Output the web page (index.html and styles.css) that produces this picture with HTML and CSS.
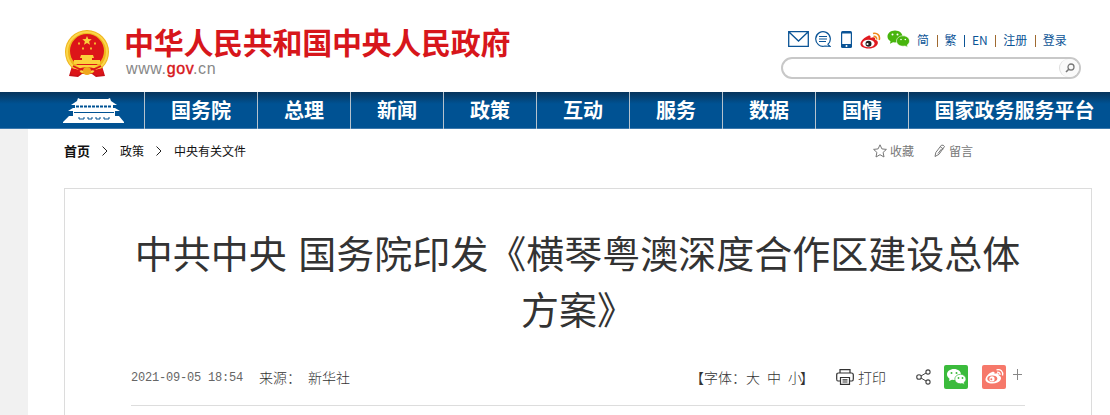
FILE: index.html
```html
<!DOCTYPE html>
<html lang="zh-CN">
	<head>
		<meta charset="UTF-8">
		<title>中央有关文件_中国政府网</title>
		<link rel="stylesheet" href="styles.css">
	</head>
	<body>
		<div class="header">
			<a class="logo" href="#">
				<svg class="emblem" width="46" height="48" viewBox="0 0 46 48">
					<path d="M8 36L5 46l9 1 4-3h10l4 3 9-1-3-10z" fill="#c91018"/>
					<circle cx="23" cy="22" r="22" fill="#f0b51c"/>
					<circle cx="23" cy="22" r="20" fill="none" stroke="#fbd64a" stroke-width="2"/>
					<circle cx="23" cy="21" r="17" fill="#dc1519"/>
					<path d="M23 6l1.3 3.1 3.4.2-2.6 2.1.9 3.3-3-1.8-3 1.800.9-3.300-2.600-2.100 3.400-.2z" fill="#fbd13b"/>
					<path d="M14 12.500h2v2h-2zM30 12.500h2v2h-2zM18 17.500h2v2h-2zM26 17.500h2v2h-2z" fill="#f6b52c"/>
					<path d="M17 25h12l1 3h-14zM18 28h10v2h-10zM10 30h26v4h-26zM12 35h22l-3 3h-16z" fill="#fbd13b"/>
					<path d="M9 36q14 8 28 0M13 41q10-6 20 0" fill="none" stroke="#dc1519" stroke-width="2"/>
					<path d="M7 39q7-1 10 4-4 4-10 1M39 39q-7-1-10 4 4 4 10 1" fill="#dc1519"/>
					<circle cx="23" cy="41" r="4" fill="#f0a71c"/>
				</svg>
				<div class="name">
					<h1>中华人民共和国中央人民政府</h1>
					<p>www.<b>gov</b>.cn</p>
				</div>
			</a>
			<div class="tools">
				<div class="links">
					<svg class="mail" width="21" height="16" viewBox="0 0 21 16"><path d="M.7.700h19.600v14.600H.7zM1 1l9.500 9L20 1" fill="none" stroke="#0b5496" stroke-width="1.300"/></svg>
					<svg class="chat" width="16" height="16" viewBox="0 0 16 16"><path d="M13 13.300A7.300 7.300 0 1 0 10 15l5 .3zM4 5.500h8M4 8h8M4 10.500h7" fill="none" stroke="#0b5496" stroke-width="1.200"/></svg>
					<svg class="phone" width="11" height="17" viewBox="0 0 11 17"><rect width="11" height="17" rx="1.500" fill="#0b5496"/><path d="M1.200 2.500h8.600v10.500H1.200z" fill="#fff"/><circle cx="5.500" cy="15" r="1" fill="#fff"/></svg>
					<svg class="weibo" width="21" height="18" viewBox="0 0 21 18">
						<path d="M8 4c2-1 3 0 2.500 2 3-1.300 5-1 4.500 1.500 6 2 2 9-6 9C3 16.500 0 14 .5 11.500 1 8.500 5 5 8 4z" fill="#e01a20"/>
						<ellipse cx="8.500" cy="11.500" rx="6" ry="3.800" fill="#fff"/><circle cx="8.500" cy="11.700" r="3" fill="#222"/><circle cx="7.500" cy="12" r="1.100" fill="#fff"/>
						<path d="M13 1.500c4-1.200 7.500 2 6.200 6.500M13.500 4.500c2-.4 3.500 1 3 3" fill="none" stroke="#f08a1c" stroke-width="1.600"/>
					</svg>
					<svg class="wechat" width="23" height="18" viewBox="0 0 23 18">
						<path d="M8 .5c4.500 0 7.500 2.800 7.500 6s-3 6-7.500 6l-2-.3-3 1.600.5-2.600C1.500 10 .5 8.500.5 6.500.5 3.300 3.500.5 8 .5z" fill="#48b50d"/>
						<path d="M16 5.800c3.800 0 6.500 2.400 6.500 5.200 0 1.700-1 3-2.300 4l.5 2.300-2.600-1.300-2.100.2c-3.800 0-6.500-2.400-6.500-5.200s2.700-5.200 6.500-5.200z" fill="#48b50d" stroke="#fff" stroke-width=".6"/>
						<g fill="#fff"><circle cx="5.500" cy="4.500" r="1"/><circle cx="10.500" cy="4.500" r="1"/><circle cx="14" cy="9.500" r=".8"/><circle cx="18.300" cy="9.500" r=".8"/></g>
					</svg>
					<a href="#">简</a><i></i><a href="#">繁</a><i></i><a href="#">EN</a><i></i><a href="#">注册</a><i></i><a href="#">登录</a>
				</div>
				<div class="search">
					<span><svg width="10" height="10" viewBox="0 0 10 10"><circle cx="6" cy="4" r="3" fill="none" stroke="#777" stroke-width="1.300"/><path d="M4 6L1 9" stroke="#777" stroke-width="1.600"/></svg></span>
				</div>
			</div>
		</div>
		<div class="nav">
			<a class="home" href="#">
				<svg width="62" height="27" viewBox="0 0 62 27">
					<path d="M15 1l2 1h28l2-1 1 3 6 4H8l6-4zM12 8h38v4H12zM10 11h42l5 3H5zM10 14h42v5H10zM6 19h50l5 6v1H0v-1z" fill="#fff"/>
					<path d="M13 9.500h36" stroke="#005293" stroke-width="2" stroke-dasharray="3 1"/>
					<path d="M11 15.500h40" stroke="#005293" stroke-width="1"/>
					<path d="M16 20v2h5v-2M25 20v2h4v-2M33 20v2h4v-2M41 20v2h5v-2" fill="none" stroke="#005293"/>
				</svg>
			</a>
			<a class="wide" href="#">国务院</a>
			<a href="#">总理</a>
			<a href="#">新闻</a>
			<a href="#">政策</a>
			<a href="#">互动</a>
			<a href="#">服务</a>
			<a href="#">数据</a>
			<a href="#">国情</a>
			<a class="last" href="#">国家政务服务平台</a>
		</div>
		<div class="main">
			<div class="crumb">
				<a class="first" href="#">首页</a>
				<svg width="6" height="10" viewBox="0 0 6 10"><path d="M.5.500L5 5 .5 9.500" fill="none" stroke="#222"/></svg>
				<a href="#">政策</a>
				<svg width="6" height="10" viewBox="0 0 6 10"><path d="M.5.500L5 5 .5 9.500" fill="none" stroke="#222"/></svg>
				<a href="#">中央有关文件</a>
				<div class="act">
					<svg width="14" height="14" viewBox="0 0 14 14"><path d="M7 .8l1.900 4.100 4.500.5-3.300 3 .9 4.600L7 10.700 3 13l.9-4.600-3.300-3 4.500-.5z" fill="none" stroke="#777"/></svg>
					<a href="#">收藏</a>
					<svg class="pen" width="12" height="14" viewBox="0 0 12 14"><path d="M1 12.500l.8-4L7.300 1.300q2-.8 3.200 1.200L5 10.300zM6.300 2.800l3 2.200M7.500 5L4 9.500" fill="none" stroke="#777"/></svg>
					<a href="#">留言</a>
				</div>
			</div>
			<div class="article">
				<h2>中共中央 国务院印发《横琴粤澳深度合作区建设总体方案》</h2>
				<div class="info">
					<span class="date">2021-09-05 18:54</span>
					<span class="from">来源：</span>
					<span>新华社</span>
					<div class="font"><span>【字体：</span><a href="#">大</a><a href="#">中</a><a href="#">小</a><span class="end">】</span></div>
					<svg class="print" width="18" height="16" viewBox="0 0 18 16"><path d="M4 4V.7h10V4M4 12H2Q.7 12 .7 10V6Q.7 4 2.500 4h13q1.800 0 1.800 2v4q0 2-1.300 2h-2M4.500 8.500h9v6.800h-9zM6.500 10.800h5M6.500 13h5" fill="none" stroke="#333" stroke-width="1.200"/></svg>
					<a class="dy" href="#">打印</a>
					<svg class="share" width="15" height="16" viewBox="0 0 15 16"><path d="M5 7l5-3M5 9l5 3" stroke="#444"/><g fill="none" stroke="#444" stroke-width="1.100"><circle cx="3" cy="8" r="2.300"/><circle cx="12" cy="3" r="2.100"/><circle cx="12" cy="13" r="2.100"/></g></svg>
					<svg class="wx" width="24" height="24" viewBox="0 0 24 24">
						<rect width="24" height="24" rx="2" fill="#3bbb3c"/>
						<path d="M10 4c4 0 7 2.300 7 5.500S14 15 10 15l-2-.3-3 1.400.5-2.400C4 12.700 3 11.200 3 9.500 3 6.300 6 4 10 4z" fill="#fff"/>
						<path d="M16.500 9.300c3 0 5.500 2.200 5.500 4.800 0 1.500-.8 2.700-2 3.500l.4 2-2.200-1-1.700.2c-3.200 0-5.700-2-5.700-4.700s2.500-4.800 5.700-4.800z" fill="#fff" stroke="#3bbb3c" stroke-width=".7"/>
						<g fill="#3bbb3c"><circle cx="7.500" cy="8" r="1"/><circle cx="12.500" cy="8" r="1"/><circle cx="14.500" cy="13" r=".9"/><circle cx="18.500" cy="13" r=".9"/></g>
					</svg>
					<svg class="wb" width="24" height="24" viewBox="0 0 24 24">
						<rect width="24" height="24" rx="2" fill="#f6786a"/>
						<path d="M10 7c2-.9 3 0 2.500 1.800 3-1.100 4.700-.6 4.200 1.400 5 2 1.600 8.300-6.200 8.300-4.500 0-7.500-2-7-4.500C4 11 7.500 8 10 7z" fill="#fff"/>
						<ellipse cx="10.300" cy="13.700" rx="5" ry="3.300" fill="#f6786a"/><circle cx="10" cy="13.900" r="2.600" fill="#fff"/><circle cx="9.300" cy="14.300" r="1" fill="#f6786a"/>
						<path d="M14.500 4.800c4-1 7 1.700 6 5.700M15 7.300c2-.4 3.300.8 3 2.700" fill="none" stroke="#fff" stroke-width="1.300"/>
					</svg>
					<svg class="more" width="9" height="11" viewBox="0 0 9 11"><path d="M4.500 0v11M0 5.500h9" stroke="#888"/></svg>
				</div>
			</div>
		</div>
	</body>
</html>
```
FILE: styles.css
```css
*{
	margin:0;
	padding:0;
	box-sizing:border-box;
}
body{
	height:415px;
	overflow:hidden;
	background:#fff;
	font-family:"Noto Sans CJK SC",sans-serif;
	font-size:12px;
	color:#333;
}
a{
	color:inherit;
	text-decoration:none;
}
svg{
	display:block;
	flex:none;
}
.header{
	display:flex;
	justify-content:space-between;
	height:92px;
	padding:0 29px 0 64px;
}
.logo{
	display:flex;
	padding-top:26px;
}
.emblem{
	margin-top:4px;
}
.name{
	margin-left:14px;
}
.name h1{
	height:34px;
	font-size:30px;
	line-height:30px;
	letter-spacing:-.3px;
	color:#d7161b;
	white-space:nowrap;
}
.name p{
	padding-left:2px;
	font:16px/18px "Liberation Sans",sans-serif;
	letter-spacing:.6px;
	color:#888;
}
.name b{
	font-weight:normal;
	color:#d7161b;
	-webkit-text-stroke:.4px #d7161b;
}
.tools{
	width:300px;
	padding-top:30px;
}
.links{
	display:flex;
	align-items:center;
	height:20px;
	padding-left:7px;
	color:#0b5496;
	white-space:nowrap;
}
.mail,.chat,.phone{
	margin-top:-2px;
}
.chat{
	margin-left:6px;
}
.phone{
	margin-left:10px;
}
.weibo{
	margin:2px 0 0 8px;
}
.wechat{
	margin:-2px 7px 0 6px;
}
.links a{
	line-height:20px;
}
.links i{
	width:1px;
	height:12px;
	margin:2px 7px 0 7.500px;
	background:#a06a30;
}
.links i:nth-of-type(2){
	background:#0b5496;
}
.search{
	display:flex;
	justify-content:flex-end;
	height:22px;
	margin-top:7px;
	border:2px solid #c8c8c8;
	border-radius:11px;
}
.search span{
	display:flex;
	align-items:center;
	justify-content:center;
	width:20px;
	height:18px;
	border-left:1px solid #ddd;
	border-radius:10px;
	background:#fafafa;
}
.nav{
	display:flex;
	height:37px;
	background:linear-gradient(#07345c,#005293 12px);
	border-bottom:1px solid #3c78ac;
	font-size:20px;
	font-weight:bold;
	color:#fff;
}
.nav a{
	flex:none;
	width:93px;
	height:37px;
	border-right:1px solid #b5c2cd;
	line-height:36px;
	text-align:center;
}
.nav .home{
	width:145px;
	padding:5px 0 0 63px;
}
.nav .wide{
	width:113px;
}
.nav .last{
	width:211px;
	border:none;
}
.main{
	height:286px;
	border-left:28px solid #f1f1f1;
	padding:0 18px 0 36px;
}
.crumb{
	display:flex;
	align-items:center;
	height:44px;
	padding-bottom:1px;
	color:#111;
}
.crumb .first{
	font-size:13px;
	font-weight:bold;
}
.crumb>svg{
	margin:0 12px;
}
.act{
	display:flex;
	align-items:center;
	margin-left:auto;
	margin-right:119px;
	color:#777;
}
.act a{
	margin-left:3px;
}
.act .pen{
	margin-left:20px;
}
.article{
	height:227px;
	margin-top:15px;
	padding:35px 66px 0;
	border:1px solid #dcdcdc;
	border-bottom:none;
}
.article h2{
	height:112px;
	font-size:38px;
	font-weight:normal;
	line-height:56px;
	word-spacing:3px;
	text-align:center;
	text-indent:-1px;
	color:#333;
}
.info{
	display:flex;
	align-items:center;
	height:70px;
	padding-top:12px;
	border-bottom:1px solid #ddd;
	font-size:14px;
	font-weight:300;
	color:#333;
}
.date{
	width:112px;
	margin-top:2px;
	font:12px "Liberation Mono",monospace;
	letter-spacing:-.2px;
	color:#666;
	white-space:nowrap;
}
.from{
	margin:0 7px 0 16px;
}
.font{
	display:flex;
	margin-left:auto;
}
.font a{
	margin-right:7px;
}
.font .end{
	margin-left:-9px;
}
.print{
	margin:0 4px 0 22px;
}
.share{
	margin-left:30px;
}
.wx{
	margin-left:13px;
}
.wb{
	margin-left:14px;
}
.more{
	margin:-5px 3px 0 7px;
}
```
